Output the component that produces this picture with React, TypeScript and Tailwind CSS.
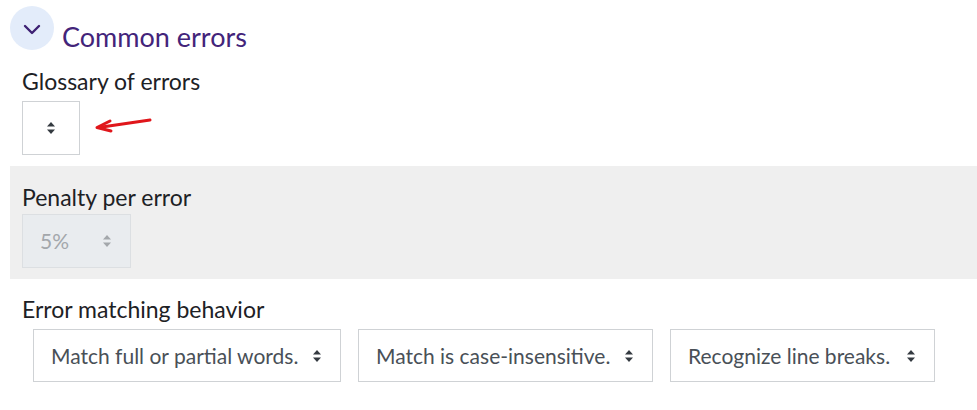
import React from "react";

function Arrows({ color = "#333" }: { color?: string }) {
  return (
    <svg width="10" height="14" viewBox="0 0 10 14" className="shrink-0">
      <path d="M5 1 L9 5.5 H1 Z" fill={color} />
      <path d="M5 13 L9 8.5 H1 Z" fill={color} />
    </svg>
  );
}

function Select({ label, className = "" }: { label: string; className?: string }) {
  return (
    <div
      className={`h-[53px] border border-[#cfd2d5] bg-white flex items-center justify-between pl-[17px] pr-[18px] text-[21px] text-[#495057] ${className}`}
    >
      <span>{label}</span>
      <Arrows color="#343a40" />
    </div>
  );
}

export default function App() {
  return (
    <div
      className="w-[977px] h-[410px] bg-white overflow-hidden text-[#1d2125]"
      style={{ fontFamily: '"Source Sans Pro", Lato, "Open Sans", sans-serif' }}
    >
      <div className="flex items-center pl-[10px] pt-[6px] gap-[8px]">
        <div className="w-[44px] h-[44px] rounded-full bg-[#e3ecfa] flex items-center justify-center">
          <svg width="18" height="12" viewBox="0 0 18 12" className="mt-[3px]">
            <path d="M2 2 L9 9 L16 2" fill="none" stroke="#3e2173" strokeWidth="2.4" strokeLinecap="round" strokeLinejoin="round" />
          </svg>
        </div>
        <div className="text-[27px] text-[#43247a] leading-none mt-[16px]">Common errors</div>
      </div>

      <div className="pl-[22px] mt-[17px]">
        <div className="text-[23px] leading-[28px]">Glossary of errors</div>
        <div className="flex items-center mt-[6px]">
          <div className="w-[58px] h-[54px] border border-[#cfd2d5] flex items-center justify-center">
            <Arrows color="#343a40" />
          </div>
          <svg width="60" height="20" viewBox="0 0 60 20" className="ml-[14px] -mt-[5px]">
            <path d="M56 4 L8 11" stroke="#e0161b" strokeWidth="3" strokeLinecap="round" fill="none" />
            <path d="M16 5 L3 11.5 L17 15" stroke="#e0161b" strokeWidth="3" strokeLinecap="round" strokeLinejoin="round" fill="none" />
          </svg>
        </div>
      </div>

      <div className="ml-[10px] mt-[11px] h-[113px] bg-[#efefef] pl-[12px] pt-[17px]">
        <div className="text-[23px] leading-[28px]">Penalty per error</div>
        <div className="mt-[3px] w-[109px] h-[54px] border border-[#dcdfe2] bg-[#e9ecef] flex items-center pl-[17px] pr-[18px] justify-between text-[21px] text-[#a3a7ab]">
          <span>5%</span>
          <Arrows color="#a3a7ab" />
        </div>
      </div>

      <div className="pl-[22px] mt-[16px]">
        <div className="text-[23px] leading-[28px]">Error matching behavior</div>
        <div className="flex mt-[6px] pl-[11px] gap-[17px]">
          <Select label="Match full or partial words." className="w-[308px]" />
          <Select label="Match is case-insensitive." className="w-[295px]" />
          <Select label="Recognize line breaks." className="w-[265px]" />
        </div>
      </div>
    </div>
  );
}
